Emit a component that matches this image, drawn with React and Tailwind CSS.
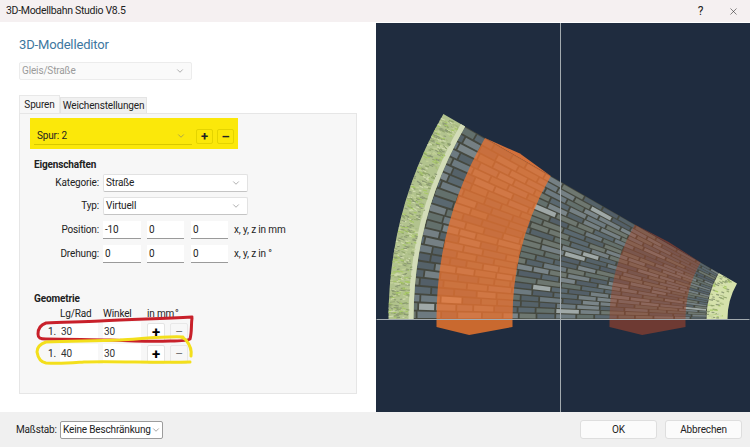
import { ChevronDown, X } from 'lucide-react';

// road fan: centre of the 30 degree curve in page coordinates
const CX = 799;
const CY = 319;

const pt = (r, deg) => {
  const a = (deg * Math.PI) / 180;
  return [CX - r * Math.cos(a), CY - r * Math.sin(a)];
};
const fmt = ([x, y]) => `${x.toFixed(1)} ${y.toFixed(1)}`;

const sector = (r1, r2, from = 0, to = 30) =>
  `M${fmt(pt(r1, from))} A${r1} ${r1} 0 0 1 ${fmt(pt(r1, to))} L${fmt(pt(r2, to))} A${r2} ${r2} 0 0 0 ${fmt(pt(r2, from))} Z`;

const capTop = (r1, r2) => `M${fmt(pt(r1, 30))} L${fmt(pt((r1 + r2) / 2, 30.7))} L${fmt(pt(r2, 30))} Z`;
const capBottom = (r1, r2) => {
  const [x1] = pt(r1, 0);
  const [x2] = pt(r2, 0);
  const mx = x1 + (x2 - x1) * 0.43;
  return `M${x1} 319 L${x1} 327 L${mx} 335 L${x2} 327 L${x2} 319 Z`;
};

let seed = 11;
const rnd = () => {
  seed = (seed * 16807) % 2147483647;
  return seed / 2147483647;
};

const STONES = ['#5a6870', '#6d7a80', '#556269', '#758084', '#646f6c', '#6e776f', '#525e67', '#7a8589'];

const bricks = [];
const ROW = 1.25;
for (let row = 0; row < 24; row++) {
  const a0 = row * ROW;
  const a1 = a0 + ROW;
  let r = 92 - (row % 2) * 10;
  while (r < 385) {
    const len = 16 + rnd() * 9;
    const r1 = Math.max(r + 0.9, 92);
    const r2 = Math.min(r + len - 0.9, 385);
    if (r2 > r1) {
      const light = rnd() > 0.975;
      bricks.push({
        d: `M${fmt(pt(r1, a0 + 0.14))} L${fmt(pt(r2, a0 + 0.14))} L${fmt(pt(r2, a1 - 0.14))} L${fmt(pt(r1, a1 - 0.14))} Z`,
        fill: light ? '#9fa8a7' : STONES[Math.floor(rnd() * STONES.length)],
      });
    }
    r += len;
  }
}

const GRASS = ['#8fa36a', '#c4d399', '#8c9974', '#d3ddb2', '#a6c862', '#a9ba80', '#869470'];
const grassBits = (rIn, rOut, count) => {
  const bits = [];
  for (let i = 0; i < count; i++) {
    const a = rnd() * 29.6 + 0.2;
    const r = rIn + rnd() * (rOut - rIn - 2);
    bits.push({
      p1: pt(r, a),
      p2: pt(Math.min(r + 2 + rnd() * 3, rOut), a + (rnd() - 0.5) * 0.3),
      c: GRASS[Math.floor(rnd() * GRASS.length)],
    });
  }
  return bits;
};
const grassLeft = grassBits(389, 410, 620);
const grassRight = grassBits(74, 92, 70);

function RoadView() {
  return (
    <svg viewBox="377 23 373 389" className="block h-full w-full" aria-hidden="true">
      <defs>
        <filter id="soft" x="-5%" y="-5%" width="110%" height="110%">
          <feGaussianBlur stdDeviation="0.75" />
        </filter>
      </defs>
      <path d={sector(92, 385)} fill="#45483f" />
      <g filter="url(#soft)">
        {bricks.map((b, i) => (
          <path key={i} d={b.d} fill={b.fill} />
        ))}
      </g>
      <path d={sector(385, 410)} fill="#b2c38e" />
      <path d={sector(385, 390)} fill="#d3dcb8" />
      <path d={sector(71, 92)} fill="#d5e1ab" />
      <g filter="url(#soft)" strokeWidth="1.2" opacity="0.9">
        {grassLeft.map((b, i) => (
          <line key={i} x1={b.p1[0]} y1={b.p1[1]} x2={b.p2[0]} y2={b.p2[1]} stroke={b.c} />
        ))}
        {grassRight.map((b, i) => (
          <line key={i} x1={b.p1[0]} y1={b.p1[1]} x2={b.p2[0]} y2={b.p2[1]} stroke={b.c} />
        ))}
      </g>
      <path d={sector(286, 362)} fill="#ec7430" opacity="0.76" />
      <path d={capTop(286, 362)} fill="#d4703a" />
      <path d={capBottom(362, 286)} fill="#c9692f" />
      <path d={sector(113, 189)} fill="#a04a30" opacity="0.5" />
      <path d={capTop(113, 189)} fill="#6f3b34" />
      <path d={capBottom(189, 113)} fill="#6e3a33" />
      <line x1="561" y1="23" x2="561" y2="412" stroke="#a3abaf" strokeWidth="1" />
      <line x1="377" y1="319.5" x2="750" y2="319.5" stroke="#a3abaf" strokeWidth="1" />
    </svg>
  );
}

function Select({ label, className = '' }) {
  return (
    <div className={`flex items-center justify-between rounded-[2px] border border-[#e2e2e2] border-b-[#c4c4c4] bg-white pl-[2px] pr-[6px] ${className}`}>
      <span className="whitespace-nowrap">{label}</span>
      <ChevronDown size={10} strokeWidth={1.4} className="shrink-0 text-[#777]" />
    </div>
  );
}

function Field({ value, className = 'w-[38px]' }) {
  return (
    <div className={`flex h-[18px] items-center border-b border-b-[#9a9a9a] bg-white pl-[2px] ${className}`}>{value}</div>
  );
}

function Row({ label, children, className = '' }) {
  return (
    <div className={`flex items-center ${className}`}>
      <div className="mr-[4px] w-[69px] text-right">{label}</div>
      {children}
    </div>
  );
}

function GeoRow({ value, className = '' }) {
  return (
    <div className={`flex h-[20px] items-center ${className}`}>
      <span className="w-[12px]">1.</span>
      <div className="flex h-[20px] w-[38px] items-center bg-white pl-[1px] text-[#333]">{value}</div>
      <div className="ml-[5px] flex h-[20px] w-[38px] items-center bg-white pl-[1px] text-[#333]">30</div>
      <button className="ml-[6px] flex h-[19px] w-[18px] items-center justify-center rounded-[2px] border border-[#e4e4e4] bg-white text-[15px] font-bold leading-none text-black">+</button>
      <button className="ml-[5px] flex h-[19px] w-[18px] items-center justify-center rounded-[2px] border border-[#e8e8e8] bg-[#f7f7f7] text-[12px] leading-none text-[#777]">–</button>
    </div>
  );
}

export default function App() {
  return (
    <div className="flex h-[447px] w-[750px] flex-col overflow-hidden bg-white font-['Roboto',sans-serif] text-[10px] leading-none tracking-[-0.15px] text-[#222]">
      <div className="flex h-[22px] shrink-0 items-center bg-[#f5f0f1] pl-[6px] pr-[11px] text-[10.5px] tracking-[-0.3px]">
        <span className="flex-1">3D-Modellbahn Studio V8.5</span>
        <span className="mr-[25px] text-[12px]">?</span>
        <X size={11} strokeWidth={1.2} />
      </div>

      <div className="mt-px flex min-h-0 flex-1">
        <div className="relative w-[376px] shrink-0 pl-[19px] pt-[13px]">
          <h1 className="text-[13px] font-normal leading-[18px] text-[#3d77a0]">3D-Modelleditor</h1>
          <Select label="Gleis/Straße" className="mt-[8px] h-[18px] w-[173px] !border-[#ececec] !bg-[#fafafa] text-[#9a9a9a]" />

          <div className="mt-[15px] flex h-[18px] items-end">
            <div className="flex h-[18px] w-[41px] items-center justify-center border border-b-0 border-[#e8e8e8] bg-[#f7f7f7]">Spuren</div>
            <div className="flex h-[16px] w-[87px] items-center justify-center border border-b-0 border-[#e4e4e4] bg-[#f0f0f0]">Weichenstellungen</div>
          </div>

          <div className="h-[281px] w-[338px] border border-[#e6e6e6] bg-[#f7f7f7] pl-[10px] pt-[4px]">
            <div className="flex h-[31px] w-[208px] items-center gap-[4px] bg-[#fbe80a] pl-[4px] pt-[6px]">
              <div className="flex h-[17px] w-[158px] items-center justify-between border-b border-b-[#d8c800] pl-[3px] pr-[6px]">
                <span>Spur: 2</span>
                <ChevronDown size={10} strokeWidth={1.4} className="text-[#777]" />
              </div>
              <div className="flex h-[15px] w-[17px] items-center justify-center rounded-[2px] border border-[#e4d400] text-[13px] font-bold leading-none">+</div>
              <div className="flex h-[15px] w-[17px] items-center justify-center rounded-[2px] border border-[#e4d400] text-[13px] font-bold leading-none">–</div>
            </div>

            <div className="ml-[4px] mt-[11px] font-bold">Eigenschaften</div>
            <Row label="Kategorie:" className="mt-[4px]">
              <Select label="Straße" className="h-[18px] w-[145px]" />
            </Row>
            <Row label="Typ:" className="mt-[5px]">
              <Select label="Virtuell" className="h-[18px] w-[145px]" />
            </Row>
            <Row label="Position:" className="mt-[6px]">
              <Field value="-10" />
              <Field value="0" className="ml-[6px] w-[37px]" />
              <Field value="0" className="ml-[7px] w-[37px]" />
              <span className="ml-[6px]">x, y, z in mm</span>
            </Row>
            <Row label="Drehung:" className="mt-[6px]">
              <Field value="0" />
              <Field value="0" className="ml-[6px] w-[37px]" />
              <Field value="0" className="ml-[7px] w-[37px]" />
              <span className="ml-[6px]">x, y, z in °</span>
            </Row>

            <div className="ml-[4px] mt-[31px] font-bold">Geometrie</div>
            <div className="ml-[30px] mt-[5px] flex text-[10px]">
              <span className="w-[43px]">Lg/Rad</span>
              <span className="w-[44px]">Winkel</span>
              <span className="w-[28px] whitespace-nowrap">in mm</span>
              <span>°</span>
            </div>
            <GeoRow value="30" className="ml-[18px] mt-[3px]" />
            <GeoRow value="40" className="ml-[18px] mt-[2px]" />
          </div>

          <svg className="absolute left-0 top-0 h-[389px] w-[376px]" viewBox="0 23 376 389" fill="none" strokeWidth="3" strokeLinecap="round" strokeLinejoin="round" aria-hidden="true">
            <path d="M192 317 C160 319 133 319 100 321 C80 322 60 322 46 323 C40 325 38 329 38 334 C38 338 40 339 46 339 C70 339 90 340 110 340 C130 341 150 342 170 341 C180 341 188 341 190 339 C192 332 191 325 192 318" stroke="#c8202a" />
            <path d="M183 337 C170 336 150 338 120 340 C90 341 70 341 46 342 C40 344 37 348 37 352 C38 358 40 362 46 363 C60 364 70 363 84 362 C110 361 160 363 190 362 M191 356 C192 350 190 345 186 340 C184 338 183 337 180 337" stroke="#f3df1c" />
          </svg>
        </div>

        <div className="min-w-0 flex-1 bg-[#1f2c3f]">
          <RoadView />
        </div>
      </div>

      <div className="flex h-[35px] shrink-0 items-center bg-[#f0f0f0] pl-[16px] pr-[8px]">
        <span className="w-[44px]">Maßstab:</span>
        <div className="flex h-[18px] w-[103px] items-center justify-between rounded-[2px] border border-[#9c9c9c] bg-white pl-[2px] pr-[4px]">
          <span className="whitespace-nowrap">Keine Beschränkung</span>
          <ChevronDown size={10} strokeWidth={1.4} className="shrink-0 text-[#666]" />
        </div>
        <div className="flex-1" />
        <button className="flex h-[19px] w-[77px] items-center justify-center rounded-[3px] border border-[#dedede] bg-[#fbfbfb]">OK</button>
        <button className="ml-[8px] flex h-[19px] w-[77px] items-center justify-center rounded-[3px] border border-[#dedede] bg-[#fbfbfb]">Abbrechen</button>
      </div>
    </div>
  );
}
